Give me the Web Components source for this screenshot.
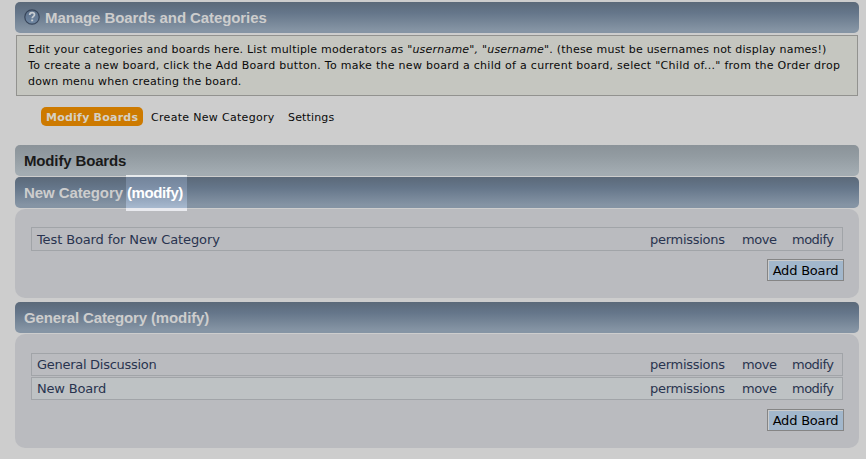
<!DOCTYPE html>
<html lang="en">
<head>
<meta charset="utf-8">
<title>Manage Boards and Categories</title>
<style>
body { margin: 0; background: #cdcdcd; font-family: "DejaVu Sans", sans-serif; color: #0a0a0a; }
</style>
</head>
<body>
<board-admin></board-admin>
<script>
const define = (name, html) => customElements.define(name, class extends HTMLElement {
  constructor() {
    super();
    const t = document.createElement('template');
    t.innerHTML = html;
    this.attachShadow({ mode: 'open' }).append(t.content.cloneNode(true));
  }
});

define('help-icon', `<style>:host{display:block;width:16px;height:16px;margin:-1px 5px 0 0;white-space:normal}svg{display:block}</style>
<svg width="16" height="16" viewBox="0 0 16 16"><defs><linearGradient id="g" x2="0" y2="1"><stop stop-color="#5d7088"/><stop offset="1" stop-color="#6f87a3"/></linearGradient></defs>
<circle cx="8" cy="8" r="7.2" fill="url(#g)" stroke="#38465b" stroke-width="1.2"/><path d="M5.7 6.1C5.7 4.5 6.7 3.7 8.1 3.7s2.4.8 2.4 2c0 1.7-2.3 1.7-2.3 3.6" fill="none" stroke="#c8cdd2" stroke-width="1.7"/><rect x="7.2" y="10.5" width="2" height="1.8" fill="#c8cdd2"/></svg>`);

define('title-bar', `<style>
:host{display:flex;align-items:center;box-sizing:border-box;height:31px;padding:0 9px;border-radius:5px;background:linear-gradient(#5b6979,#65768a 35%,#8594a4 90%);color:#cdcdcd;font:bold 15px/31px "Liberation Sans",Arial,sans-serif;letter-spacing:-.09px;white-space:pre}
:host([tone=light]){background:linear-gradient(#8b9399,#929ba1 35%,#a3acb2 90%);color:#1a1a1a}
</style><slot></slot>`);

define('info-box', `<style>
:host{display:block;box-sizing:border-box;height:61px;margin:2px 1px 0;padding:6px 11px;border:1px solid #92928f;background:#c5c6c0;font-size:11px;line-height:16px;white-space:nowrap}
</style><slot></slot>`);

define('tab-item', `<style>
:host{display:block;box-sizing:border-box;height:19px;line-height:21px;font-size:11px;padding:0 5px;border-radius:5px;white-space:nowrap}
:host([active]){background:#cd7a00;color:#d5d0c5;font-weight:bold}
</style><slot></slot>`);

define('category-panel', `<style>
:host{display:flex;flex-direction:column;box-sizing:border-box;margin-top:1px;padding:18px 16px 17px;border-radius:10px;background:#babbbf}
</style><slot></slot><slot name="action"></slot>`);

define('board-row', `<style>
:host{display:flex;align-items:center;box-sizing:border-box;height:23px;margin-bottom:1px;padding:0 9px 0 5px;border:1px solid #a1a4a8;color:#29344f;font-size:13px;white-space:nowrap}
:host([alt]){background:#bec2c4}
:host([tall]){height:24px}
.name{flex:1}
.links{display:grid;grid-template-columns:92px 50px 41px;letter-spacing:-.28px}
.links :nth-child(2){letter-spacing:-.4px}
.links :nth-child(3){letter-spacing:-.5px}
</style><span class="name"><slot></slot></span><span class="links"><span>permissions</span><span>move</span><span>modify</span></span>`);

define('add-button', `<style>
:host{display:block;align-self:flex-end;margin:8px -1px 0 0}
button{display:block;box-sizing:border-box;width:77px;height:22px;padding:1px 0 0;border:1px solid #858585;background:#a2b7cc;box-shadow:inset 1px 1px #cdcdcd;color:#000;font:13px/19px "DejaVu Sans",sans-serif;letter-spacing:-.2px;white-space:nowrap}
</style><button><slot></slot></button>`);

define('spot-light', `<style>
:host{position:absolute;left:126px;top:175px;width:61px;height:36px;box-sizing:border-box;overflow:hidden;background:linear-gradient(#e7eaec 0 2px,#73849a 2px,#7e90a8 13px,#a7b9cf 33px,#e9eaef 33px)}
b{display:block;padding-left:1px;color:#fff;font:bold 15px/36px "Liberation Sans",Arial,sans-serif;letter-spacing:-.4px;white-space:nowrap}
</style><b><slot></slot></b>`);

define('board-admin', `<style>
:host{display:block;padding:2px 7px 0 15px}
.tabs{display:flex;padding:11px 0 0 26px;gap:3px}
.list{margin-top:19px;letter-spacing:-.15px}
.second{margin-top:4px;letter-spacing:-.13px}
title-bar+title-bar{margin-top:1px}
</style>
<title-bar><help-icon></help-icon>Manage Boards and Categories</title-bar>
<info-box><div style="letter-spacing:.207px">Edit your categories and boards here. List multiple moderators as <i>"username", "username"</i>. (these must be usernames not display names!)</div><div style="letter-spacing:.286px">To create a new board, click the Add Board button. To make the new board a child of a current board, select "Child of..." from the Order drop</div><div style="letter-spacing:.2px">down menu when creating the board.</div></info-box>
<nav class="tabs"><tab-item active style="width:102px;letter-spacing:.24px">Modify Boards</tab-item><tab-item style="width:134px;letter-spacing:.31px">Create New Category</tab-item><tab-item style="letter-spacing:.15px">Settings</tab-item></nav>
<title-bar class="list" tone="light">Modify Boards</title-bar>
<title-bar>New Category</title-bar>
<category-panel><board-row tall style="letter-spacing:-.12px">Test Board for New Category</board-row><add-button slot="action" style="margin-top:7px">Add Board</add-button></category-panel>
<title-bar class="second">General Category (modify)</title-bar>
<category-panel style="padding-top:19px"><board-row style="letter-spacing:-.28px">General Discussion</board-row><board-row alt style="letter-spacing:-.18px">New Board</board-row><add-button slot="action">Add Board</add-button></category-panel>
<spot-light>(modify)</spot-light>`);
</script>
</body>
</html>
